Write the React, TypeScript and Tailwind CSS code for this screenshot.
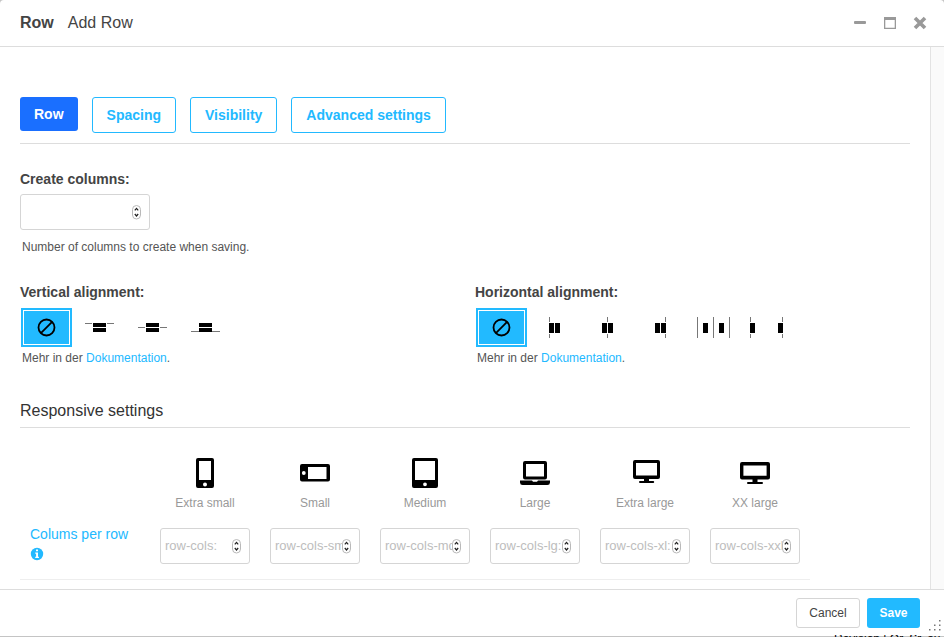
import { useState, type ReactNode } from "react";

type Option = { id: string; label: string; icon: ReactNode };

const NoneIcon = (
  <svg width="21" height="21" viewBox="0 0 21 21" fill="none" stroke="#000" strokeWidth="1.8" aria-hidden="true">
    <circle cx="10.5" cy="10.5" r="8" />
    <path d="M4.9 16.1 16.1 4.9" />
  </svg>
);

function VerticalIcon({ line }: { line: "top" | "middle" | "bottom" }) {
  const y = { top: 5, middle: 9, bottom: 13 }[line];
  return (
    <svg width="29" height="19" viewBox="0 0 29 19" shapeRendering="crispEdges" aria-hidden="true">
      <rect x="0" y={y} width="29" height="1" fill="#777" />
      {line !== "bottom" && <rect x="7" y="4" width="15" height="11" fill="#fff" />}
      <rect x="8" y="5" width="13" height="4" fill="#000" />
      <rect x="8" y="10" width="13" height="4" fill="#000" />
    </svg>
  );
}

function HorizontalIcon({ lines, blocks }: { lines: number[]; blocks: [number, number][] }) {
  return (
    <svg width="35" height="23" viewBox="0 0 35 23" shapeRendering="crispEdges" aria-hidden="true">
      {lines.map((x) => (
        <rect key={x} x={x} y="1" width="1" height="21" fill="#777" />
      ))}
      {blocks.map(([x, w]) => (
        <g key={x}>
          <rect x={x} y="6" width={w + 1} height="12" fill="#fff" />
          <rect x={x} y="7" width={w} height="10" fill="#000" />
        </g>
      ))}
    </svg>
  );
}

const verticalOptions: Option[] = [
  { id: "v-none", label: "None", icon: NoneIcon },
  { id: "v-top", label: "Top", icon: <VerticalIcon line="top" /> },
  { id: "v-middle", label: "Middle", icon: <VerticalIcon line="middle" /> },
  { id: "v-bottom", label: "Bottom", icon: <VerticalIcon line="bottom" /> },
];

const horizontalOptions: Option[] = [
  { id: "h-none", label: "None", icon: NoneIcon },
  { id: "h-start", label: "Start", icon: <HorizontalIcon lines={[12]} blocks={[[12, 5], [18, 5]]} /> },
  { id: "h-center", label: "Center", icon: <HorizontalIcon lines={[17]} blocks={[[12, 5], [18, 5]]} /> },
  { id: "h-end", label: "End", icon: <HorizontalIcon lines={[22]} blocks={[[12, 5], [18, 5]]} /> },
  { id: "h-around", label: "Around", icon: <HorizontalIcon lines={[1, 17, 33]} blocks={[[7, 5], [23, 5]]} /> },
  { id: "h-between", label: "Between", icon: <HorizontalIcon lines={[1, 33]} blocks={[[1, 5], [29, 5]]} /> },
];

const devices: { name: string; placeholder: string; icon: ReactNode }[] = [
  {
    name: "Extra small",
    placeholder: "row-cols:",
    icon: (
      <path
        fillRule="evenodd"
        d="M9 1h14a2 2 0 0 1 2 2v26a2 2 0 0 1-2 2H9a2 2 0 0 1-2-2V3a2 2 0 0 1 2-2zM10 4v19h12V4zM16 25.4a2 2 0 1 0 0 4 2 2 0 0 0 0-4z"
      />
    ),
  },
  {
    name: "Small",
    placeholder: "row-cols-sm:",
    icon: (
      <path
        fillRule="evenodd"
        d="M3 7h26a2 2 0 0 1 2 2v13.5a2 2 0 0 1-2 2H3a2 2 0 0 1-2-2V9a2 2 0 0 1 2-2zM9 10v12h18.5V10zM4.8 14.1a1.9 1.9 0 1 0 0 3.8 1.9 1.9 0 0 0 0-3.8z"
      />
    ),
  },
  {
    name: "Medium",
    placeholder: "row-cols-md:",
    icon: (
      <path
        fillRule="evenodd"
        d="M5 1h22a2 2 0 0 1 2 2v26a2 2 0 0 1-2 2H5a2 2 0 0 1-2-2V3a2 2 0 0 1 2-2zM6 4v19h20V4zM16 25.4a1.9 1.9 0 1 0 0 3.8 1.9 1.9 0 0 0 0-3.8z"
      />
    ),
  },
  {
    name: "Large",
    placeholder: "row-cols-lg:",
    icon: (
      <path
        fillRule="evenodd"
        d="M6 4h20a2 2 0 0 1 2 2v14.5a2 2 0 0 1-2 2H6a2 2 0 0 1-2-2V6a2 2 0 0 1 2-2zM7 7v12.5h18V7zM1 23.5h12l1 1.3h4l1-1.3h12v2a2.6 2.6 0 0 1-2.6 2.5H3.6A2.6 2.6 0 0 1 1 25.5z"
      />
    ),
  },
  {
    name: "Extra large",
    placeholder: "row-cols-xl:",
    icon: (
      <path
        fillRule="evenodd"
        d="M6 3h23a2 2 0 0 1 2 2v15a2 2 0 0 1-2 2h-9v2h4.2a1 1 0 0 1 0 2H11a1 1 0 0 1 0-2h4v-2H6a2 2 0 0 1-2-2V5a2 2 0 0 1 2-2zM7 6v12.6h21V6z"
      />
    ),
  },
  {
    name: "XX large",
    placeholder: "row-cols-xxl:",
    icon: (
      <path
        fillRule="evenodd"
        d="M3 5h26a2 2 0 0 1 2 2v13.4a2 2 0 0 1-2 2H18.5V25H23a1 1 0 0 1 0 2H9a1 1 0 0 1 0-2h4.5v-2.6H3a2 2 0 0 1-2-2V7a2 2 0 0 1 2-2zM4.4 8.4v10.4h23.2V8.4z"
      />
    ),
  },
];

function NumberField({ id, placeholder, label, wide }: { id: string; placeholder?: string; label?: string; wide?: boolean }) {
  return (
    <div className={wide ? "relative h-9 w-[130px]" : "relative h-9 w-[90px]"}>
      <input
        id={id}
        type="number"
        aria-label={label}
        placeholder={placeholder}
        className="h-full w-full appearance-none rounded-[3px] border border-[#d5d5d5] bg-white pr-3 pb-px pl-1 text-[13px] text-[#444] outline-none [-moz-appearance:textfield] placeholder:text-[#bdbdbd] [&::-webkit-inner-spin-button]:appearance-none [&::-webkit-outer-spin-button]:appearance-none"
      />
      <svg
        className="pointer-events-none absolute top-[10px] right-2 h-4 w-[11px]"
        viewBox="0 0 11 16"
        fill="none"
        aria-hidden="true"
      >
        <rect x="1.5" y="1.5" width="8" height="13.5" rx="4" fill="#fff" stroke="#b9b9b9" />
        <path d="m3.8 6.4 1.7-2 1.7 2M3.8 10l1.7 2 1.7-2" stroke="#222" strokeWidth="1.2" />
      </svg>
    </div>
  );
}

function IconChoice({ legend, name, options }: { legend: string; name: string; options: Option[] }) {
  const [value, setValue] = useState(options[0].id);
  return (
    <div>
      <fieldset>
        <legend className="text-[14px] leading-5 font-bold text-[#444]">{legend}</legend>
        <div className="mt-[6px] ml-px flex gap-[2px]">
          {options.map((option) => (
            <label key={option.id} className="relative block h-[39px] w-[51px] cursor-pointer">
              <input
                type="radio"
                name={name}
                value={option.id}
                aria-label={option.label}
                checked={value === option.id}
                onChange={() => setValue(option.id)}
                className="peer sr-only"
              />
              <span className="flex h-full w-full items-center justify-center border-2 border-transparent peer-checked:border-[#22baff] peer-checked:bg-[#22baff] peer-checked:inset-ring peer-checked:inset-ring-white">
                {option.icon}
              </span>
            </label>
          ))}
        </div>
      </fieldset>
      <p className="mt-[2px] ml-[2px] text-[12px] leading-[18px] text-[#555]">
        Mehr in der{" "}
        <a href="#dokumentation" className="text-[#22b9ff]">
          Dokumentation
        </a>
        .
      </p>
    </div>
  );
}

const tabs = ["Row", "Spacing", "Visibility", "Advanced settings"];

export default function App() {
  return (
    <div className="relative h-screen overflow-hidden bg-[#c4c4c4] pb-px font-['Liberation_Sans',Arial,sans-serif] text-[#444]">
      <section role="dialog" aria-label="Row" className="flex h-full flex-col overflow-hidden rounded-t-[4px] bg-white">
        <header className="flex h-[47px] shrink-0 items-center justify-between border-b border-[#ddd] pr-[17px] pl-5">
          <h1 className="flex gap-[14px] text-[16px] leading-5">
            <span className="font-bold">Row</span>
            <span>Add Row</span>
          </h1>
          <div className="flex gap-4 text-[#999]">
            <button type="button" aria-label="Minimize">
              <svg width="14" height="14" viewBox="0 0 14 14" fill="currentColor">
                <rect x="1" y="5" width="12" height="3" rx="1" />
              </svg>
            </button>
            <button type="button" aria-label="Maximize">
              <svg width="14" height="14" viewBox="0 0 14 14" fill="currentColor">
                <path fillRule="evenodd" d="M1 1h12v12H1zM2.3 4v7.7h9.4V4z" />
              </svg>
            </button>
            <button type="button" aria-label="Close">
              <svg width="14" height="14" viewBox="0 0 14 14" stroke="currentColor" strokeWidth="3.6">
                <path d="m2 2 10 10M12 2 2 12" />
              </svg>
            </button>
          </div>
        </header>

        <div className="flex min-h-0 flex-1">
          <main className="min-w-0 flex-1 overflow-hidden px-5 pt-[50px]">
            <nav className="flex h-[47px] items-start gap-[14px] border-b border-[#ddd] text-[14px] font-bold">
              {tabs.map((tab, i) => (
                <button
                  key={tab}
                  type="button"
                  className={
                    i === 0
                      ? "h-[34px] rounded-[3px] bg-[#1a6fff] px-[14px] text-white"
                      : "h-9 rounded-[3px] border border-[#22b9ff] px-[14px] text-[#22b9ff]"
                  }
                >
                  {tab}
                </button>
              ))}
            </nav>

            <div className="mt-[25px]">
              <label htmlFor="create-columns" className="mb-[5px] block text-[14px] leading-5 font-bold">
                Create columns:
              </label>
              <NumberField id="create-columns" wide />
              <p className="mt-2 ml-[2px] text-[12px] leading-[18px] text-[#555]">
                Number of columns to create when saving.
              </p>
            </div>

            <div className="mt-[26px] grid grid-cols-2 gap-5">
              <IconChoice legend="Vertical alignment:" name="vertical" options={verticalOptions} />
              <IconChoice legend="Horizontal alignment:" name="horizontal" options={horizontalOptions} />
            </div>

            <h2 className="mt-[34px] border-b border-[#ddd] pb-[6px] text-[16px] leading-5 text-[#333]">
              Responsive settings
            </h2>

            <div className="grid w-[790px] grid-cols-[120px_repeat(6,90px)] gap-x-5 border-b border-[#eee] pt-[29px] pb-[15px]">
              <div />
              {devices.map((device) => (
                <div key={device.name} className="flex flex-col items-center text-[12px] leading-[18px] text-[#999]">
                  <svg width="32" height="32" viewBox="0 0 32 32" fill="#000" aria-hidden="true">
                    {device.icon}
                  </svg>
                  <span className="mt-[5px] mb-4">{device.name}</span>
                </div>
              ))}
              <div className="pl-[10px] text-[14px] leading-3 text-[#22b9ff]">
                <div className="whitespace-nowrap">Colums per row</div>
                <button type="button" aria-label="Information" className="mt-[7px] block">
                  <svg width="14" height="14" viewBox="0 0 14 14">
                    <circle cx="7" cy="7" r="6.2" fill="#22b9ff" />
                    <path d="M6 2.500h2v1.800H6zM5.200 5.500h2.800v4.200h.9v1.300H5.200V9.700h.9V6.800h-.9z" fill="#fff" />
                  </svg>
                </button>
              </div>
              {devices.map((device, i) => (
                <NumberField
                  key={device.name}
                  id={`row-cols-${i}`}
                  label={`Colums per row, ${device.name}`}
                  placeholder={device.placeholder}
                />
              ))}
            </div>
          </main>
          <div className="w-[14px] shrink-0 border-l border-[#e3e3e3] bg-[#fafafa]" />
        </div>

        <footer className="relative flex h-[47px] shrink-0 items-center justify-end gap-[7px] border-t border-[#ddd] pr-6 text-[12px]">
          <button type="button" className="h-[30px] w-16 rounded-[3px] border border-[#d5d5d5] bg-white">
            Cancel
          </button>
          <button type="button" className="h-[30px] w-[53px] rounded-[3px] bg-[#22baff] font-bold text-white">
            Save
          </button>
          <svg className="absolute right-0 bottom-[3px]" width="16" height="14" viewBox="0 0 16 14" fill="#777" aria-hidden="true">
            <path d="M11 1h1.500v1.500H11zM6 5.500h1.500V7H6zM11 5.500h1.500V7H11zM1 10h1.500v1.500H1zM6 10h1.500v1.500H6zM11 10h1.500v1.500H11z" />
          </svg>
        </footer>
      </section>
      <div className="absolute right-0 bottom-0 h-[2px] w-[110px] overflow-hidden text-[12px] leading-[9px] whitespace-nowrap text-black" aria-hidden="true">
        Revision | Or, Sr, au
      </div>
    </div>
  );
}
